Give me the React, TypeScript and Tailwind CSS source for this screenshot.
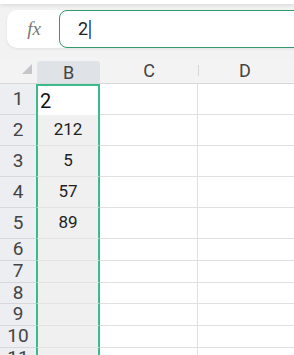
import React from "react";

const rows = [
  { n: 1, v: "2", h: "h-[31px]", active: true },
  { n: 2, v: "212", h: "h-[31px]" },
  { n: 3, v: "5", h: "h-[31px]" },
  { n: 4, v: "57", h: "h-[31px]" },
  { n: 5, v: "89", h: "h-[31px]" },
  { n: 6, v: "", h: "h-[22px]" },
  { n: 7, v: "", h: "h-[22px]" },
  { n: 8, v: "", h: "h-[21px]" },
  { n: 9, v: "", h: "h-[22px]" },
  { n: 10, v: "", h: "h-[22px]" },
  { n: 11, v: "", h: "h-[22px]" },
];

export default function App() {
  return (
    <div className="w-[294px] h-[355px] overflow-hidden bg-[#f2f2f2] font-['Roboto',sans-serif]">
      <div className="h-[4px] bg-white shadow-[0_1px_4px_rgba(0,0,0,0.12)]" />
      <div className="h-[54px] pt-[6px] pl-[7px]">
        <div className="flex h-[38px] w-[320px] rounded-l-[10px] bg-white shadow-[0_1px_3px_rgba(0,0,0,0.08)]">
          <div className="w-[52px] flex items-center justify-center pl-[2px] text-[19px] italic text-[#777] font-['Liberation_Serif',serif]">
            fx
          </div>
          <div className="flex-1 flex items-center rounded-l-[8px] border border-[#2f9a6c] pl-[18px]">
            <span className="text-[18px] text-[#222] leading-none">2</span>
            <span className="ml-[1px] w-[2px] h-[19px] bg-[#3a7be0]" />
          </div>
        </div>
      </div>
      <div className="flex h-[26px] border-b border-[#d9d9d9] bg-[#f3f3f3]">
        <div className="w-[36px] relative">
          <svg className="absolute left-[22px] top-[6px]" width="10" height="10" viewBox="0 0 10 10">
            <polygon points="10,0 10,10 0,10" fill="#c4c6ca" />
          </svg>
        </div>
        <div className="w-[63px] ml-[1px] mt-[3px] rounded-t-[4px] bg-[#dfe2e6] flex items-center justify-center text-[18px] text-[#444]">
          B
        </div>
        <div className="w-[98px] flex items-center justify-center text-[18px] text-[#444]">
          C
        </div>
        <div className="w-[1px] my-[7px] bg-[#d7d7d7]" />
        <div className="flex-1 flex items-center justify-center text-[18px] text-[#444] pr-[3px]">
          D
        </div>
      </div>
      {rows.map((r) => (
        <div key={r.n} className={`flex ${r.h}`}>
          <div className="w-[36px] flex items-center justify-center bg-[#eceef1] border-b border-[#d6d8dc] text-[19px] text-[#444]">
            {r.n}
          </div>
          <div
            className={`w-[64px] border-x-2 border-[#3dba8b] flex items-center ${
              r.active
                ? "bg-white justify-start pl-[2px] text-[20px] text-[#111] border-t-2"
                : "bg-[#f0f0f0] justify-center text-[17px] text-[#222] border-b border-b-[#e3e3e3]"
            }`}
          >
            {r.v}
          </div>
          <div className="w-[97px] bg-white border-b border-[#e0e0e0]" />
          <div className="w-[1px] bg-[#e0e0e0]" />
          <div className="flex-1 bg-white border-b border-[#e0e0e0]" />
        </div>
      ))}
    </div>
  );
}
